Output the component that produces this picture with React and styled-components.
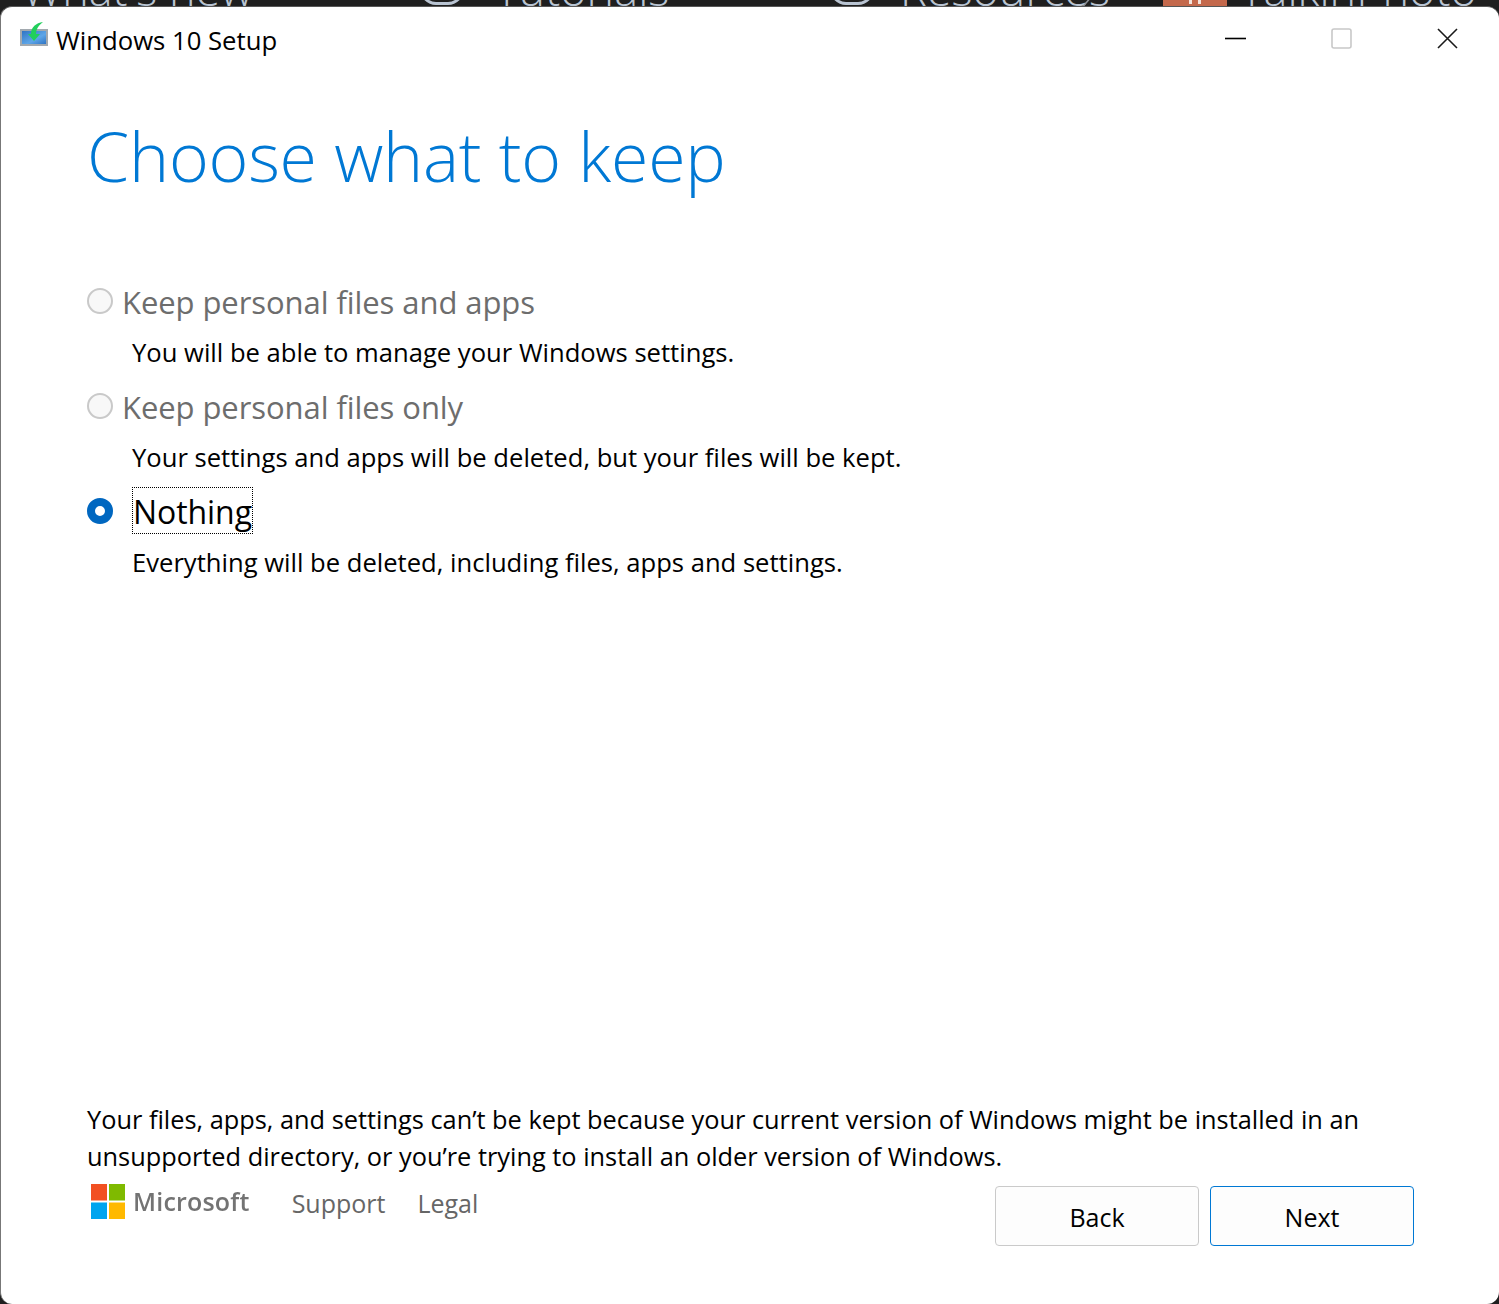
import React from 'react';
import styled, { createGlobalStyle } from 'styled-components';

const GlobalStyle = createGlobalStyle`
  html, body {
    margin: 0;
    padding: 0;
    background: #1f1f1f;
  }
  * {
    box-sizing: border-box;
  }
`;

const Page = styled.div`
  width: 1499px;
  height: 1304px;
  display: flex;
  flex-direction: column;
  overflow: hidden;
  background: #1f1f1f;
  font-family: 'Open Sans', 'Noto Sans', sans-serif;
`;

const Backdrop = styled.div`
  height: 6px;
  flex: none;
  overflow: hidden;
  padding-left: 22px;
  display: grid;
  grid-template-columns: 398px 75px 335px 70px 185px 78px 77px 1fr;
  grid-template-rows: 6px;
  align-items: end;
`;

const BackdropText = styled.span`
  font-size: 45px;
  font-weight: 300;
  line-height: 45px;
  margin-bottom: -5px;
  color: #b9c4d2;
  white-space: nowrap;
`;

const BackdropGlyph = styled.span`
  width: 44px;
  height: 20px;
  border: 3px solid #b9c4d2;
  border-radius: 0 0 16px 16px;
  margin-bottom: 1px;
`;

const BackdropChevron = styled.span`
  width: 16px;
  height: 6px;
  border-left: 2px solid #8a8f96;
  transform: skewX(-40deg);
`;

const BackdropBadge = styled.span`
  width: 64px;
  height: 6px;
  background: #c4694c;
  display: flex;
  justify-content: center;
  gap: 6px;
`;

const BadgeLeg = styled.span`
  width: 3px;
  height: 4px;
  background: #f4e4dc;
`;

const Window = styled.div`
  flex: 1;
  min-height: 0;
  display: flex;
  flex-direction: column;
  background: #ffffff;
  border-top: 1px solid #575757;
  border-left: 1px solid #777777;
  border-radius: 12px;
  padding-bottom: 58px;
`;

const TitleBar = styled.div`
  height: 68px;
  flex: none;
  display: flex;
  align-items: center;
  padding-left: 18px;
`;

const AppIconImage = styled.svg`
  width: 30px;
  height: 26px;
  display: block;
  flex: none;
  margin-bottom: 14px;
`;

const AppTitle = styled.span`
  margin-left: 7px;
  margin-bottom: 2px;
  font-size: 25.7px;
  color: #000000;
  white-space: nowrap;
`;

const WindowControls = styled.div`
  margin-left: auto;
  margin-bottom: 6px;
  margin-right: 41px;
  display: flex;
  align-items: center;
  gap: 85px;
`;

const ControlIcon = styled.svg`
  width: 21px;
  height: 21px;
  display: block;
`;

const Content = styled.main`
  flex: 1;
  display: flex;
  flex-direction: column;
  padding: 0 85px 0 86px;
`;

const Heading = styled.h1`
  margin: 31px 0 71px;
  font-size: 68px;
  font-weight: 300;
  line-height: 100px;
  letter-spacing: -0.23px;
  color: #0078d4;
  white-space: nowrap;
`;

const OptionRow = styled.div`
  height: 47px;
  display: flex;
  align-items: center;
`;

const Radio = styled.span`
  width: 26px;
  height: 26px;
  flex: none;
  border-radius: 50%;
  border: ${p => (p.$checked ? '8px solid #0067c0' : '2px solid #c9c9c9')};
  background: ${p => (p.$checked ? '#ffffff' : '#f8f8f8')};
`;

const OptionLabel = styled.label`
  margin-left: ${p => (p.$focused ? '19px' : '9px')};
  padding: 0 ${p => (p.$focused ? '1px' : '0')};
  height: 47px;
  line-height: 50px;
  font-size: ${p => (p.$focused ? '32px' : '31px')};
  letter-spacing: -0.07px;
  color: ${p => (p.$focused ? '#000000' : '#6d6d6d')};
  outline: ${p => (p.$focused ? '1px dotted #000000' : 'none')};
  outline-offset: -1px;
  white-space: nowrap;
`;

const OptionHint = styled.p`
  margin: 0 0 0 45px;
  height: 58px;
  font-size: 25.6px;
  line-height: 58px;
  color: #000000;
  white-space: nowrap;
`;

const Notice = styled.p`
  margin: auto 0 0;
  font-size: 25.35px;
  line-height: 37px;
  color: #000000;
  white-space: nowrap;
`;

const FooterRow = styled.div`
  display: flex;
  align-items: flex-start;
  padding-top: 9px;
`;

const Brand = styled.div`
  display: flex;
  align-items: center;
  margin-left: 4px;
`;

const BrandName = styled.span`
  margin-left: 8px;
  font-size: 25px;
  font-weight: 600;
  line-height: 35px;
  letter-spacing: 0.2px;
  color: #737373;
  filter: blur(0.5px);
`;

const FooterLink = styled.a`
  margin-left: ${p => p.$gap}px;
  font-size: 25px;
  line-height: 38px;
  color: #666666;
  white-space: nowrap;
`;

const Buttons = styled.div`
  margin-left: auto;
  margin-top: 2px;
  display: flex;
  gap: 11px;
`;

const Button = styled.button`
  width: 204px;
  height: 60px;
  padding: 2px 0 0;
  border-radius: 4px;
  border: 1px solid ${p => (p.$primary ? '#0078d4' : '#cacaca')};
  background: #fdfdfd;
  font-family: inherit;
  font-size: 25px;
  color: #000000;
`;

const AppIcon = () => (
  <AppIconImage viewBox="0 0 30 26">
    <defs>
      <linearGradient id="trayFill" x1="0" y1="0" x2="1" y2="1">
        <stop offset="0" stopColor="#2f74c4" />
        <stop offset="0.6" stopColor="#5ea6e8" />
        <stop offset="1" stopColor="#2f74c4" />
      </linearGradient>
    </defs>
    <rect x="1" y="8" width="28" height="17" fill="#a2a9af" />
    <rect x="3" y="10" width="24" height="13" fill="url(#trayFill)" />
    <path d="M24 1 C17 2 12 6 12 13 L9 13 L15 20 L21 13 L17 13 C17 8 20 4 24 1 Z" fill="#22cf5c" />
  </AppIconImage>
);

const MicrosoftLogo = () => (
  <svg width="34" height="35" viewBox="0 0 34 35" style={{ display: 'block', flex: 'none' }}>
    <rect width="16" height="16.5" fill="#f25022" />
    <rect x="18" width="16" height="16.5" fill="#7fba00" />
    <rect y="18.5" width="16" height="16.5" fill="#00a4ef" />
    <rect x="18" y="18.5" width="16" height="16.5" fill="#ffb900" />
  </svg>
);

const options = [
  { label: 'Keep personal files and apps', hint: 'You will be able to manage your Windows settings.' },
  { label: 'Keep personal files only', hint: 'Your settings and apps will be deleted, but your files will be kept.' },
  { label: 'Nothing', hint: 'Everything will be deleted, including files, apps and settings.', selected: true },
];

const App = () => {
  return (
    <Page>
      <GlobalStyle />
      <Backdrop>
        <BackdropText>What's new</BackdropText>
        <BackdropGlyph />
        <BackdropText>Tutorials</BackdropText>
        <BackdropGlyph />
        <BackdropText>Resources</BackdropText>
        <BackdropChevron />
        <BackdropBadge>
          <BadgeLeg />
          <BadgeLeg />
        </BackdropBadge>
        <BackdropText>TalkinPhoto</BackdropText>
      </Backdrop>

      <Window>
        <TitleBar>
          <AppIcon />
          <AppTitle>Windows 10 Setup</AppTitle>
          <WindowControls>
            <ControlIcon viewBox="0 0 21 21">
              <path d="M0 10.5H21" stroke="#000" strokeWidth="1.6" />
            </ControlIcon>
            <ControlIcon viewBox="0 0 21 21">
              <rect x="1" y="1" width="19" height="19" rx="2" fill="none" stroke="#c8c8c8" strokeWidth="1.6" />
            </ControlIcon>
            <ControlIcon viewBox="0 0 21 21">
              <path d="M1 1L20 20M20 1L1 20" stroke="#1a1a1a" strokeWidth="1.6" />
            </ControlIcon>
          </WindowControls>
        </TitleBar>

        <Content>
          <Heading>Choose what to keep</Heading>

          {options.map(o => (
            <div key={o.label}>
              <OptionRow>
                <Radio $checked={o.selected} />
                <OptionLabel $focused={o.selected}>{o.label}</OptionLabel>
              </OptionRow>
              <OptionHint>{o.hint}</OptionHint>
            </div>
          ))}

          <Notice>
            Your files, apps, and settings can’t be kept because your current version of Windows might be installed in an
            <br />
            unsupported directory, or you’re trying to install an older version of Windows.
          </Notice>

          <FooterRow>
            <Brand>
              <MicrosoftLogo />
              <BrandName>Microsoft</BrandName>
            </Brand>
            <FooterLink $gap={42}>Support</FooterLink>
            <FooterLink $gap={32}>Legal</FooterLink>
            <Buttons>
              <Button>Back</Button>
              <Button $primary>Next</Button>
            </Buttons>
          </FooterRow>
        </Content>
      </Window>
    </Page>
  );
};

export default App;
